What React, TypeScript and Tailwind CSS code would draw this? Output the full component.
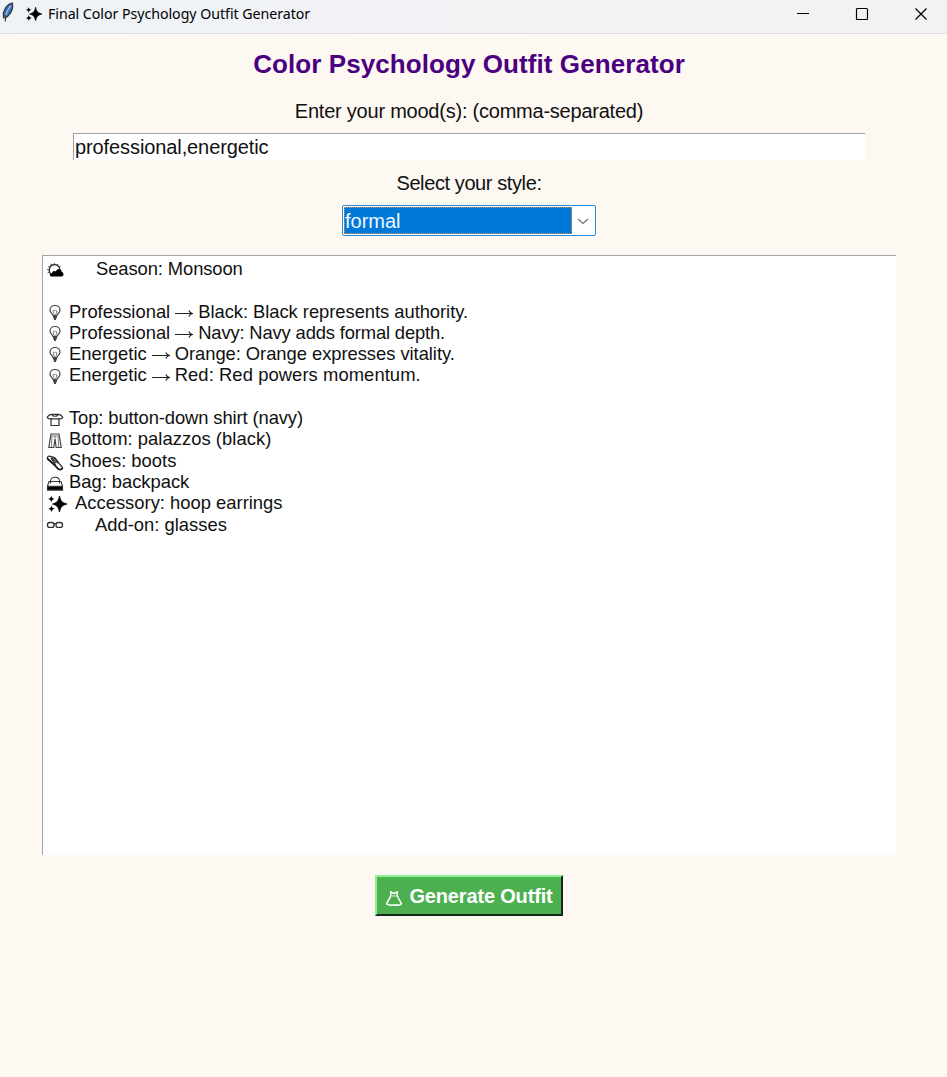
import React from "react";

type IconProps = { className?: string };

function Sparkles({ className }: IconProps) {
  return (
    <svg viewBox="0 0 20 18" className={className} fill="black">
      <path d="M12.500 1C13.600 5.900 14.800 7.600 20 9C14.800 10.400 13.600 12.100 12.500 17C11.400 12.100 10.200 10.400 5.500 9C10.200 7.600 11.400 5.900 12.500 1Z" stroke="black" strokeWidth=".8" strokeLinejoin="round" />
      <path d="M4.300 .8C4.900 3 5.400 3.500 7.500 4.100C5.400 4.700 4.900 5.200 4.300 7.400C3.700 5.200 3.200 4.700 1 4.100C3.200 3.500 3.700 3 4.300 .8Z" />
      <path d="M4.500 10.300C5.100 12.600 5.600 13.200 8 13.800C5.600 14.400 5.100 15 4.500 17.300C3.900 15 3.400 14.400 1.200 13.800C3.400 13.200 3.900 12.600 4.500 10.300Z" />
    </svg>
  );
}

function Feather() {
  return (
    <svg viewBox="0 0 14 20" className="h-5 w-3.5" fill="none">
      <path d="M11.500 1.200C7.500 1.800 3.800 6 2.300 11.500L2.500 15.800L6 15C9.500 12 12.500 7 11.500 1.200Z" fill="#3c70b4" stroke="#30333a" strokeWidth="1.200" />
      <path d="M10 3.500C6.500 7.500 5 11.500 4 17" stroke="#9dc1e8" strokeWidth="1.200" />
      <path d="M4.800 13L4.300 19.500" stroke="#333" strokeWidth="1.200" />
    </svg>
  );
}

function Weather() {
  return (
    <svg viewBox="0 0 18 18" className="h-[18px] w-[18px]" fill="none">
      <path d="M4.300 12.500C1.800 9 3.800 3.700 8.200 3.700C11 3.700 13.200 5.200 13.900 8" stroke="#222" strokeWidth="1.300" />
      <path d="M1.500 12L3.200 11M1 8.500H2.800M2 5.300L3.700 6.300M4.700 2.900L5.800 4.400M8.500 2V3.800M12 3L11 4.500M14.500 5.300L13 6.300" stroke="#333" strokeWidth=".8" />
      <path d="M6 15.500C3 15.300 3.300 11.700 6 12C6.500 9.700 9 9.500 10 10.500C11 6.800 15.900 7.600 15.700 10.900C18.400 11.600 18 15.500 15.500 15.500Z" fill="black" />
    </svg>
  );
}

function Bulb() {
  return (
    <svg viewBox="0 0 18 18" className="h-[18px] w-[18px]" fill="none" stroke="#444" strokeWidth="1.200">
      <path d="M7 11.500C6.700 9.500 4 9 4 6.200C4 3.400 6.200 1.500 9 1.500C11.800 1.500 14 3.400 14 6.200C14 9 11.300 9.500 11 11.500Z" />
      <path d="M8.200 11L7 6.500C8 5.500 8.500 7.500 9 6.500C9.500 5.500 10 7.500 11 6.500L9.800 11" strokeWidth=".9" stroke="#777" />
      <path d="M7 12.200H11M7.200 13.800H10.800M8 15.300H10" strokeWidth="1.500" />
    </svg>
  );
}

function Shirt() {
  return (
    <svg viewBox="0 0 18 18" className="h-[18px] w-[18px]" fill="none" stroke="#333" strokeWidth="1.200">
      <path d="M6 4.300C3.500 4.500 2 5.300 1.200 7.500C2 8.700 3.500 9 5 8.500V15.500H13V8.500C14.500 9 16 8.700 16.800 7.500C16 5.300 14.500 4.500 12 4.300Z" />
      <path d="M6 4.500C6.500 6.800 11.500 6.800 12 4.500M5 8.800H13" />
    </svg>
  );
}

function Trousers() {
  return (
    <svg viewBox="0 0 18 18" className="h-[18px] w-[18px]" fill="none" stroke="#444" strokeWidth="1.200">
      <path d="M5 2H13L13.500 5L15.200 15.500H10.200L9 7L7.800 15.500H2.800L4.500 5Z" />
      <path d="M4.500 4H13.500M6 5L5.300 15M12 5L12.700 15M9 4V7" strokeWidth=".7" />
    </svg>
  );
}

function Shoe() {
  return (
    <svg viewBox="0 0 18 18" className="h-[18px] w-[18px]" fill="none" stroke="#222" strokeWidth="1.200">
      <path d="M1.300 5.500C1 3.800 2.300 3 4 3.200C5.500 4.500 8 2.800 10 6L13.500 11L16.500 14.500C17 16.700 14 17.200 12.300 16L8.500 12Z" />
      <path d="M1.300 5.500L8.500 12L12.300 16C14 17 16 16.500 16.500 15" strokeWidth="1.800" />
      <path d="M6 4.500L10 10M8 4.500L12 10.500M5 5L9.500 12" />
    </svg>
  );
}

function Bag() {
  return (
    <svg viewBox="0 0 18 18" className="h-[18px] w-[18px]" fill="none" stroke="#333" strokeWidth="1.100">
      <path d="M3 7.500H15L16.500 12V16H1.500V12Z" />
      <path d="M1.500 12.300H16.500V16H1.500Z" fill="black" />
      <path d="M4.500 9.500V7C4.500 2 13.500 2 13.500 7V9.500" />
    </svg>
  );
}

function Glasses() {
  return (
    <svg viewBox="0 0 18 18" className="h-[18px] w-[18px]" fill="none" stroke="#333" strokeWidth="1.300">
      <rect x="1.500" y="5.500" width="6.500" height="4.900" rx="2.200" />
      <rect x="10" y="5.500" width="6.500" height="4.900" rx="2.200" />
      <path d="M7.800 7.200C8.500 6.400 9.500 6.400 10.200 7.200" />
    </svg>
  );
}

function Arrow() {
  return (
    <svg viewBox="0 0 18 10" className="mx-[5px] inline-block h-[10px] w-[18px]" fill="none" stroke="#222" strokeWidth="1.200">
      <path d="M0 5.500H17.300M13.800 2.500C14.500 4 15.500 5 17.300 5.500C15.500 6 14.500 7 13.800 8.500" />
    </svg>
  );
}

type Line = { icon?: React.ReactNode; style: string; text: string; result?: string; resultStyle?: string };

const lines: Line[] = [
  { icon: <Weather />, style: "pl-[32px] tracking-[-0.1px]", text: "Season: Monsoon" },
  { style: "", text: "" },
  { icon: <Bulb />, style: "pl-[5px]", text: "Professional", result: "Black: Black represents authority.", resultStyle: "tracking-[-0.05px]" },
  { icon: <Bulb />, style: "pl-[5px]", text: "Professional", result: "Navy: Navy adds formal depth.", resultStyle: "tracking-[-0.16px]" },
  { icon: <Bulb />, style: "pl-[5px]", text: "Energetic", result: "Orange: Orange expresses vitality.", resultStyle: "tracking-[-0.05px]" },
  { icon: <Bulb />, style: "pl-[5px]", text: "Energetic", result: "Red: Red powers momentum.", resultStyle: "tracking-[0.07px]" },
  { style: "", text: "" },
  { icon: <Shirt />, style: "pl-[5px] tracking-[-0.11px]", text: "Top: button-down shirt (navy)" },
  { icon: <Trousers />, style: "pl-[5px] tracking-[0.04px]", text: "Bottom: palazzos (black)" },
  { icon: <Shoe />, style: "pl-[5px]", text: "Shoes: boots" },
  { icon: <Bag />, style: "pl-[5px] tracking-[-0.03px]", text: "Bag: backpack" },
  { icon: <Sparkles className="ml-px h-[18px] w-5 shrink-0" />, style: "pl-[8px]", text: "Accessory: hoop earrings" },
  { icon: <Glasses />, style: "pl-[31px]", text: "Add-on: glasses" },
];

export default function App() {
  return (
    <div className="flex h-[1077px] w-[947px] flex-col overflow-hidden bg-[#fdf8f1] font-['Liberation_Sans',Arial,sans-serif] text-[#111]">
      <header className="flex h-[34px] shrink-0 items-start border-b border-[#dedede] bg-linear-to-r from-[#eef3f8] to-[#f3f1f3] to-70% pl-px">
        <div className="pt-[2px]"><Feather /></div>
        <Sparkles className="mt-[6px] ml-[10px] h-4 w-[17px]" />
        <h1 className="mt-[4px] ml-[6px] font-['Noto_Sans',sans-serif] text-[14.2px] leading-5 tracking-[-0.04px] whitespace-nowrap text-black">Final Color Psychology Outfit Generator</h1>
        <div className="mt-[7px] mr-[19px] ml-auto flex gap-[45px]">
          <svg className="h-[14px] w-[14px]" viewBox="0 0 14 14"><path d="M1 6.500H13" stroke="black" /></svg>
          <svg className="h-[14px] w-[14px]" viewBox="0 0 14 14"><rect x="1.500" y="1.500" width="11" height="11" rx="1" fill="none" stroke="black" strokeWidth="1.200" /></svg>
          <svg className="h-[14px] w-[14px]" viewBox="0 0 14 14"><path d="M1.500 1.500L12.500 12.500M12.500 1.500L1.500 12.500" stroke="black" strokeWidth="1.200" /></svg>
        </div>
      </header>

      <main className="flex w-[938px] flex-col items-center">
        <h2 className="mt-[15px] text-[26px] leading-[30px] font-bold tracking-[0.08px] whitespace-nowrap text-[#4b0082]">Color Psychology Outfit Generator</h2>
        <label className="mt-[20px] text-[20px] leading-6 tracking-[-0.23px] whitespace-nowrap">Enter your mood(s): (comma-separated)</label>
        <div className="mt-[10px] h-[27px] w-[792px] border-t border-l border-[#a0a0a0] bg-white pl-px text-[20px] leading-[26px] tracking-[-0.1px]">professional,energetic</div>
        <label className="mt-[11px] text-[20px] leading-6 tracking-[-0.4px] whitespace-nowrap">Select your style:</label>
        <div className="mt-[10px] flex h-[31px] w-[254px] rounded-[2px] border border-[#278bdd] bg-white p-px">
          <div className="w-[228px] border border-dotted border-[#e38a43] bg-[#0078d7] text-[20px] leading-[26px] text-[#f0f7ff]">formal</div>
          <div className="flex flex-1 items-center justify-center">
            <svg className="h-3 w-3" viewBox="0 0 12 12" fill="none"><path d="M1 4L6 8.500L11 4" stroke="#707070" strokeWidth="1.200" /></svg>
          </div>
        </div>
        <section className="mt-[19px] h-[600px] w-[854px] border-t border-l border-[#a5a5a5] bg-white pt-[2px] pl-[3px] text-[18.400px] leading-[21.300px]">
          {lines.map((line, i) => (
            <div key={i} className="flex h-[21.300px] items-center whitespace-pre">
              {line.icon && <span className="flex shrink-0 pt-[3px]">{line.icon}</span>}
              <span className={line.style}>{line.text}{line.result && <><Arrow /><span className={line.resultStyle}>{line.result}</span></>}</span>
            </div>
          ))}
        </section>
        <button className="mt-[20px] flex h-[41px] w-[188px] items-center justify-center border-2 border-t-[#8df293] border-r-[#172719] border-b-[#172719] border-l-[#8df293] bg-[#4caf50] text-[20px] leading-6 font-bold tracking-[-0.17px] whitespace-nowrap text-white">
          <svg className="mt-[5px] mr-[6px] h-[18px] w-[18px] shrink-0" viewBox="0 0 18 18" fill="none" stroke="white" strokeWidth="1.500"><path d="M5.800 2V4.200C6.400 5.500 6 6.800 5 8.500L1.500 14.700C1.800 15.500 3 15.200 4 15.800C5.200 16.800 6.500 15.500 8 16C9 16.700 10.500 16.200 11.500 15.800C13 16.700 15.800 16 16.500 14.700L13 8.500C12 6.800 11.600 5.500 12.200 4.200V2M6 3.500C7.500 3 8.300 4.200 9 4.500C9.700 4.200 10.500 3 12 3.500" /><path d="M6.300 7H11.700" strokeWidth=".8" /></svg>
          Generate Outfit
        </button>
      </main>
    </div>
  );
}
